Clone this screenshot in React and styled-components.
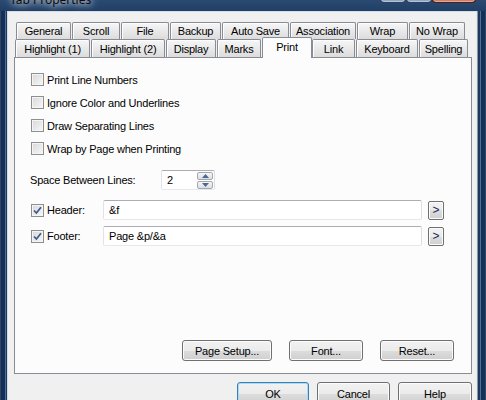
import styled, { createGlobalStyle } from "styled-components"

const GlobalStyle = createGlobalStyle`
  html, body {
    margin: 0;
    padding: 0;
    background: #1c3659;
  }
  body {
    font-family: "Liberation Sans", Arial, sans-serif;
    font-size: 11px;
    letter-spacing: -0.2px;
    color: #000;
  }
`

const Window = styled.div`
  width: 486px;
  height: 400px;
  overflow: hidden;
  display: flex;
  flex-direction: column;
  background: #1c3659;
`

const TitleBar = styled.div`
  height: 11px;
  flex: none;
  display: flex;
  align-items: flex-start;
  justify-content: space-between;
  overflow: hidden;
  background: linear-gradient(to bottom, #2a4a72, #203f66);
`

const Title = styled.span`
  margin: -7px 0 0 10px;
  font-family: "Noto Sans", "Liberation Sans", sans-serif;
  font-size: 12px;
  line-height: 14px;
  letter-spacing: 0;
  color: #0c0c0c;
  text-shadow: 0 0 6px #fff, 0 0 10px rgba(255, 255, 255, 0.8);
`

const Caption = styled.div`
  display: flex;
  margin: -15px 10px 0 0;
`

const CaptionButton = styled.span`
  width: ${p => (p.$close ? 44 : 26)}px;
  height: 18px;
  box-sizing: border-box;
  border: 1px solid ${p => (p.$close ? "#4f1e16" : "#2e4260")};
  border-top: none;
  border-radius: 0 0 4px 4px;
  background: ${p =>
    p.$close
      ? "linear-gradient(to bottom, #e8b3a4, #cf7a64)"
      : "linear-gradient(to bottom, #b4c3d6, #8ea3bf)"};
  box-shadow: inset 0 0 0 1px rgba(255, 255, 255, 0.35);
`

const Body = styled.div`
  flex: 1;
  display: flex;
`

const Frame = styled.div`
  flex: none;
  width: ${p => (p.$side === "left" ? 7 : 9)}px;
  background: ${p =>
    p.$side === "left"
      ? "linear-gradient(to right, #33465e 0 1px, #14305a 1px 5px, #4f6f97 5px 6px, #1d385c 6px 7px)"
      : "linear-gradient(to right, #8d99a8 0 1px, #1d385c 1px 3px, #4f6f97 3px 4px, #14305a 4px 8px, #33465e 8px 9px)"};
`

const Client = styled.div`
  flex: 1;
  display: flex;
  flex-direction: column;
  padding: 10px 4px 0 6px;
  background: #f0f0f0;
  border-top: 1px solid #d3dce7;
  border-left: 1px solid #d3dce7;
  border-right: 1px solid #e4e9ef;
`

const TabRow = styled.div`
  display: flex;
  align-items: flex-start;
  height: ${p => p.$height}px;
  margin-left: ${p => p.$inset}px;
`

const Tab = styled.div`
  position: relative;
  flex: none;
  box-sizing: border-box;
  width: ${p => p.$w - 1}px;
  height: ${p => p.$height}px;
  margin-right: 1px;
  display: flex;
  align-items: center;
  justify-content: center;
  border: 1px solid #898c95;
  border-bottom: none;
  border-radius: 2px 2px 0 0;
  background: linear-gradient(to bottom, #f6f6f6, #e9e9e9 50%, #dcdcdc);
  box-shadow: inset 1px 1px 0 #fdfdfd;
  white-space: nowrap;

  &[data-active="true"] {
    z-index: 1;
    width: ${p => p.$w}px;
    margin: -2px 0 -1px;
    height: ${p => p.$height + 3}px;
    padding-bottom: 3px;
    background: #fcfcfc;
    box-shadow: none;
  }
`

const Panel = styled.div`
  height: 317px;
  box-sizing: border-box;
  display: flex;
  flex-direction: column;
  padding: 15px 16px 12px 16px;
  border: 1px solid #898c95;
  background: #fcfcfc;
`

const CheckList = styled.div`
  display: flex;
  flex-direction: column;
  gap: 10px;
`

const CheckRow = styled.label`
  display: flex;
  align-items: center;
  height: 13px;
`

const Box = styled.span`
  flex: none;
  width: 13px;
  height: 13px;
  box-sizing: border-box;
  display: flex;
  align-items: center;
  justify-content: center;
  border: 1px solid #8e8f8f;
  background: linear-gradient(135deg, #d8d8d8, #f7f7f7);
  box-shadow: inset 0 0 0 1px #f4f4f4;
`

const Text = styled.span`
  margin-left: 3px;
  white-space: nowrap;
  width: ${p => (p.$w ? `${p.$w}px` : "auto")};
`

const SpinRow = styled.div`
  display: flex;
  align-items: center;
  margin-top: 15px;
  height: 20px;
`

const SpinLabel = styled.span`
  width: 131px;
  margin-left: -1px;
  white-space: nowrap;
`

const Spin = styled.div`
  width: 54px;
  height: 20px;
  box-sizing: border-box;
  display: flex;
  align-items: center;
  padding: 1px 1px 1px 5px;
  border: 1px solid #abadb3;
  border-color: #abadb3 #dbdfe6 #e3e9ef #e2e3ea;
  border-radius: 2px;
  background: #fff;
`

const SpinValue = styled.span`
  flex: 1;
`

const SpinArrows = styled.div`
  display: flex;
  flex-direction: column;
  gap: 1px;
`

const SpinArrow = styled.span`
  width: 16px;
  height: 8px;
  box-sizing: border-box;
  display: flex;
  align-items: center;
  justify-content: center;
  border: 1px solid #a3a8b0;
  border-radius: 2px;
  background: linear-gradient(to bottom, #f6f6f6, #dedede);
`

const FieldRow = styled.div`
  display: flex;
  align-items: center;
  height: 20px;
  margin-top: ${p => p.$top}px;
  margin-right: 11px;
`

const Field = styled.div`
  flex: 1;
  height: 20px;
  box-sizing: border-box;
  display: flex;
  align-items: center;
  padding-left: 5px;
  border: 1px solid #abadb3;
  border-color: #abadb3 #dbdfe6 #e3e9ef #e2e3ea;
  border-radius: 2px;
  background: #fff;
`

const Button = styled.button`
  flex: none;
  box-sizing: border-box;
  width: ${p => p.$w}px;
  height: ${p => p.$h || 21}px;
  padding: 0;
  font-family: inherit;
  font-size: 11px;
  letter-spacing: inherit;
  color: #000;
  border: 1px solid ${p => (p.$default ? "#3c7fb1" : "#707070")};
  border-radius: 3px;
  background: linear-gradient(to bottom, #f2f2f2 0%, #ebebeb 50%, #dddddd 50%, #cfcfcf 100%);
  box-shadow: inset 0 0 0 1px ${p => (p.$default ? "#a6dbf7" : "#fbfbfb")};
`

const MoreButton = styled(Button)`
  margin-left: 6px;
  border-radius: 2px;
  color: #14245a;
  font-size: 12px;
  line-height: 1;
`

const PanelButtons = styled.div`
  margin-top: auto;
  display: flex;
  justify-content: flex-end;
  gap: 17px;
  padding-right: 1px;
`

const DialogButtons = styled.div`
  display: flex;
  justify-content: flex-end;
  gap: 8px;
  margin-top: 8px;
`

const row1 = [
  ["General", 56], ["Scroll", 49], ["File", 49], ["Backup", 52],
  ["Auto Save", 68], ["Association", 67], ["Wrap", 52], ["No Wrap", 57],
]

const row2 = [
  ["Highlight (1)", 76], ["Highlight (2)", 75], ["Display", 51], ["Marks", 45],
  ["Print", 50], ["Link", 44], ["Keyboard", 63], ["Spelling", 50],
]

const options = [
  "Print Line Numbers",
  "Ignore Color and Underlines",
  "Draw Separating Lines",
  "Wrap by Page when Printing",
]

function CheckBox({ checked }) {
  return (
    <Box>
      {checked && (
        <svg width="9" height="9" viewBox="0 0 9 9">
          <path d="M1 4.5 L3.4 7 L8 1.2" fill="none" stroke="#3c5a8c" strokeWidth="1.7" />
        </svg>
      )}
    </Box>
  )
}

function Arrow({ up }) {
  return (
    <svg width="7" height="4" viewBox="0 0 7 4">
      <path d={up ? "M0 4 L3.5 0 L7 4 Z" : "M0 0 L3.5 4 L7 0 Z"} fill="#4a6a96" />
    </svg>
  )
}

export default function App() {
  return (
    <Window>
      <GlobalStyle />
      <TitleBar>
        <Title>Tab Properties</Title>
        <Caption>
          <CaptionButton />
          <CaptionButton />
          <CaptionButton $close />
        </Caption>
      </TitleBar>

      <Body>
        <Frame $side="left" />
        <Client>
          <TabRow $inset={2} $height={17}>
            {row1.map(([name, w]) => (
              <Tab key={name} $w={w} $height={17}>{name}</Tab>
            ))}
          </TabRow>
          <TabRow $inset={1} $height={18}>
            {row2.map(([name, w]) => (
              <Tab key={name} $w={w} $height={18} data-active={name === "Print"}>
                {name}
              </Tab>
            ))}
          </TabRow>

          <Panel>
            <CheckList>
              {options.map(text => (
                <CheckRow key={text}>
                  <CheckBox />
                  <Text>{text}</Text>
                </CheckRow>
              ))}
            </CheckList>

            <SpinRow>
              <SpinLabel>Space Between Lines:</SpinLabel>
              <Spin>
                <SpinValue>2</SpinValue>
                <SpinArrows>
                  <SpinArrow><Arrow up /></SpinArrow>
                  <SpinArrow><Arrow /></SpinArrow>
                </SpinArrows>
              </Spin>
            </SpinRow>

            <FieldRow $top={10}>
              <CheckBox checked />
              <Text $w={56}>Header:</Text>
              <Field>&amp;f</Field>
              <MoreButton $w={16} $h={19}>&gt;</MoreButton>
            </FieldRow>
            <FieldRow $top={6}>
              <CheckBox checked />
              <Text $w={56}>Footer:</Text>
              <Field>Page &amp;p/&amp;a</Field>
              <MoreButton $w={16} $h={19}>&gt;</MoreButton>
            </FieldRow>

            <PanelButtons>
              <Button $w={90}>Page Setup...</Button>
              <Button $w={74}>Font...</Button>
              <Button $w={74}>Reset...</Button>
            </PanelButtons>
          </Panel>

          <DialogButtons>
            <Button $w={72} $h={23} $default>OK</Button>
            <Button $w={73} $h={23}>Cancel</Button>
            <Button $w={74} $h={23}>Help</Button>
          </DialogButtons>
        </Client>
        <Frame $side="right" />
      </Body>
    </Window>
  )
}
